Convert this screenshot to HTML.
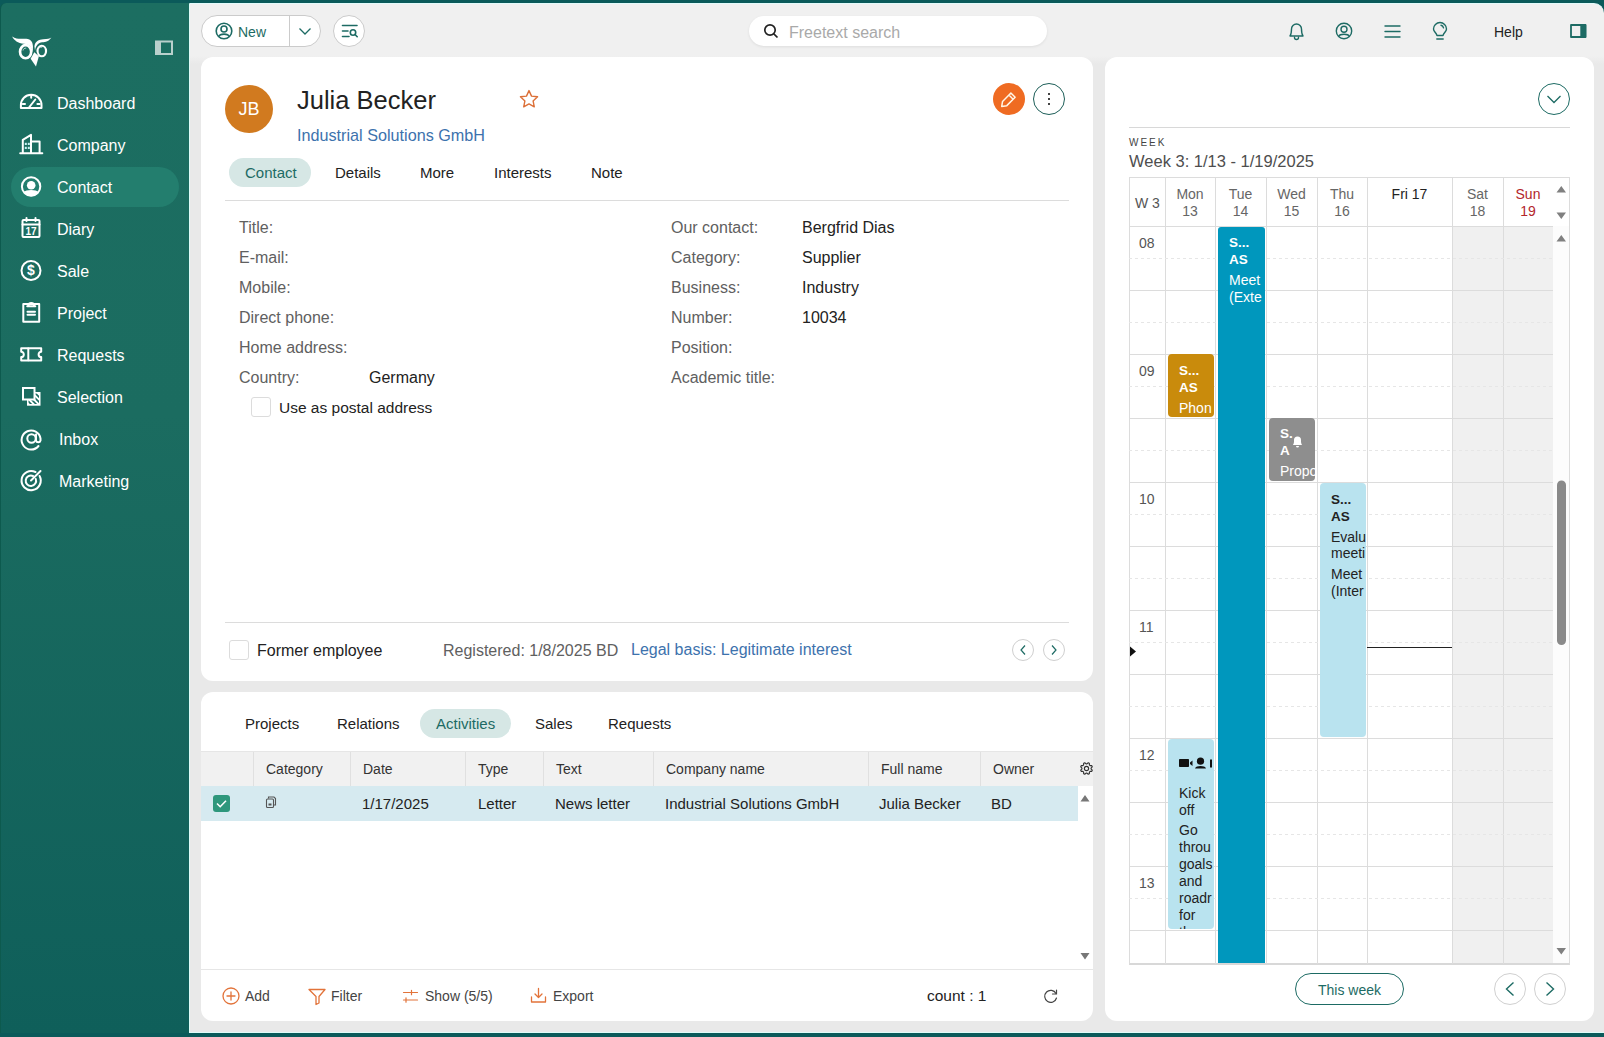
<!DOCTYPE html>
<html><head><meta charset="utf-8">
<style>
*{box-sizing:border-box;margin:0;padding:0}
html,body{width:1604px;height:1037px;overflow:hidden}
body{background:#0b5a5a;font-family:"Liberation Sans",sans-serif;position:relative;color:#222}
.a{position:absolute}
.t{position:absolute;white-space:nowrap;line-height:20px;height:20px}
#side{left:0;top:3px;width:189px;height:1030px;background:linear-gradient(180deg,#1c6e61 0%,#1b6c60 40%,#0f5f5a 100%);border-top-left-radius:6px;border-left:1px solid #0d5a4e}
#main{left:189px;top:3px;width:1415px;height:1030px;background:linear-gradient(180deg,#f0f0f0 0px,#f0f0f0 52px,#e9e9e9 60px,#e9e9e9 100%);border-left:1px solid #dffcf8;border-top:1px solid #e3fbfb;border-bottom:1px solid #dffcf8;border-top-right-radius:10px}
.card{position:absolute;background:#fff;border-radius:12px}
.nav{position:absolute;left:0;width:189px;height:20px;color:#fff;font-size:16px}
.nav span{position:absolute;left:57px;top:0;line-height:20px}
.nav svg{position:absolute;left:19px;top:-2px}
.ico{position:absolute}
.lbl{font-size:16px;color:#606060}
.val{font-size:16px;color:#222}
.th{font-size:14px;color:#333}
.td{font-size:15px;color:#222}
.ft{font-size:14px;color:#444}
.ev{overflow:hidden;font-size:14px}
.ev b,.ev i{position:absolute;left:11px;font-style:normal;white-space:nowrap;line-height:16px}
.ev b{font-weight:bold;font-size:13.5px}
</style></head>
<body>
<div id="side" class="a">
</div>
<!-- logo -->
<svg class="a" style="left:12px;top:36px" width="40" height="31" viewBox="140 220 820 640">
<path fill="#fff" d="M140,230 C250,300 330,275 430,275 C530,280 570,350 570,440 L565,560 C545,450 500,385 380,378 C260,370 180,310 140,230 Z"/>
<path fill="#fff" d="M950,250 C900,330 830,345 760,350 C680,360 625,420 612,520 L600,430 C615,330 690,292 780,287 C870,282 920,275 950,250 Z"/>
<ellipse cx="418" cy="545" rx="115" ry="135" fill="none" stroke="#fff" stroke-width="55"/>
<ellipse cx="752" cy="530" rx="88" ry="108" fill="none" stroke="#fff" stroke-width="45"/>
<path fill="none" stroke="#fff" stroke-width="14" d="M365,520 C370,480 400,470 430,470 M690,480 C700,455 730,445 760,455"/>
<path fill="#fff" d="M522,690 L598,558 L692,640 L632,852 Z"/>
<path fill="none" stroke="#1b6b60" stroke-width="12" d="M598,520 L660,580"/>
</svg>
<!-- collapse icon -->
<svg class="a" style="left:155px;top:40px" width="19" height="16" viewBox="0 0 19 16">
<rect x="1" y="1.5" width="16" height="12.5" fill="none" stroke="#b9d0cc" stroke-width="2"/>
<rect x="1" y="1.5" width="5" height="12.5" fill="#b9d0cc"/>
</svg>
<!-- active pill -->
<div class="a" style="left:11px;top:167px;width:168px;height:40px;border-radius:20px;background:#237e6e"></div>
<div class="nav" style="top:94px"><span>Dashboard</span></div>
<div class="nav" style="top:136px"><span>Company</span></div>
<div class="nav" style="top:178px"><span>Contact</span></div>
<div class="nav" style="top:220px"><span>Diary</span></div>
<div class="nav" style="top:262px"><span>Sale</span></div>
<div class="nav" style="top:304px"><span>Project</span></div>
<div class="nav" style="top:346px"><span>Requests</span></div>
<div class="nav" style="top:388px"><span>Selection</span></div>
<div class="nav" style="top:430px"><span style="left:59px">Inbox</span></div>
<div class="nav" style="top:472px"><span style="left:59px">Marketing</span></div>
<svg class="a" style="left:0;top:0" width="189" height="520" viewBox="0 0 189 520" fill="none" stroke="#fff" stroke-width="2" stroke-linecap="round" stroke-linejoin="round">
<!-- dashboard gauge -->
<path d="M20.9,108 L20.9,105 A10.3,10.3 0 0 1 41.5,105 L41.5,108 Z"/>
<path d="M22.8,104 L25,104 M37.4,104 L39.6,104 M31.2,95.8 L31.2,97.8 M29,107.5 L35.3,99.5"/>
<!-- company -->
<path d="M20.2,153.2 L42.3,153.2 M22.8,153 L22.8,139.8 L31,134.8 L31,153 M31,141.6 L39.6,141.6 L39.6,153"/>
<rect x="24.8" y="142.8" width="2" height="2.2" fill="#c8f4f4" stroke="none"/><rect x="27.8" y="142.8" width="2" height="2.2" fill="#c8f4f4" stroke="none"/>
<rect x="24.8" y="146.8" width="2" height="2.2" fill="#c8f4f4" stroke="none"/><rect x="27.8" y="146.8" width="2" height="2.2" fill="#c8f4f4" stroke="none"/>
<!-- contact -->
<circle cx="31.1" cy="186.5" r="9.2"/>
<circle cx="31.2" cy="185.3" r="4.3" fill="#fff" stroke="none"/>
<path d="M23.8,192.5 C25.5,189.3 36.7,189.3 38.4,192.5 A9,9 0 0 1 23.8,192.5 Z" fill="#fff" stroke="none"/>
<!-- diary -->
<rect x="22.5" y="220" width="17" height="17" rx="1"/>
<path d="M22.5,224.5 L39.5,224.5 M26.5,218 L26.5,221 M35.5,218 L35.5,221"/>
<!-- sale -->
<circle cx="31" cy="270.5" r="9.5"/>
<!-- project -->
<path d="M23.3,304 L23.3,321.8 L39.2,321.8 L39.2,304 Z"/>
<path d="M27.2,306.2 L35.3,306.2 M28.3,305.5 A3,3 0 0 1 34.2,305.5"/>
<path d="M27.5,311.8 L35,311.8 M27.5,314.8 L35,314.8"/>
<!-- requests -->
<path d="M21.2,348.3 L41.2,348.3 L41.2,351.8 A2.6,2.6 0 0 0 41.2,357 L41.2,360.5 L21.2,360.5 L21.2,357 A2.6,2.6 0 0 0 21.2,351.8 Z"/>
<path d="M28.3,348.5 L28.3,360.3"/>
<!-- selection -->
<clipPath id="selclip"><rect x="28.5" y="393.5" width="10.5" height="10.5"/></clipPath>
<rect x="27" y="392" width="13.5" height="13.7" fill="#fff" stroke="none"/>
<path clip-path="url(#selclip)" d="M34.5,392.5 L41,399 M34,397 L42,405 M31,399 L38,406 M26,399 L33,406" stroke="#1b6b60" stroke-width="1.6" stroke-linecap="butt"/>
<rect x="23" y="388" width="11.5" height="11.5" fill="#1b6b60" stroke-linecap="butt" stroke-linejoin="miter"/>
<!-- inbox -->
<path d="M38.5,446 A9.5,9.5 0 1 1 40.5,438.5 L40.5,440.5 A2.3,2.3 0 0 1 36,440.5 L36,434.5"/>
<circle cx="31.5" cy="438.5" r="4.2"/>
<!-- marketing -->
<path d="M39.6,476 A9.6,9.6 0 1 1 35.5,472"/>
<path d="M35.8,479 A5.2,5.2 0 1 1 33,476"/>
<path d="M31,480.5 L40.5,471"/>
</svg>
<div class="a" style="left:0;top:0;width:189px;height:20px"></div>
<svg class="a" style="left:0;top:0" width="189" height="300" viewBox="0 0 189 300">
<text x="31" y="235" fill="#fff" font-size="10" font-weight="bold" text-anchor="middle" font-family="Liberation Sans">17</text>
<text x="31" y="275" fill="#fff" font-size="14" font-weight="bold" text-anchor="middle" font-family="Liberation Sans">$</text>
</svg>

<div id="main" class="a"></div>

<!-- TOPBAR -->
<div class="a" style="left:201px;top:15px;width:120px;height:32px;border:1px solid #cbcbcb;border-radius:16px;background:#fff"></div>
<div class="a" style="left:289px;top:15px;width:1px;height:32px;background:#cbcbcb"></div>
<svg class="a" style="left:214px;top:21px" width="20" height="20" viewBox="0 0 20 20" fill="none" stroke="#1d6b64" stroke-width="1.6">
<circle cx="10" cy="10" r="7.8"/><circle cx="10" cy="8" r="3"/><path d="M4.8,15.6 C6,12.3 14,12.3 15.2,15.6"/>
</svg>
<div class="t" style="left:238px;top:22px;font-size:14px;color:#1d6b64">New</div>
<svg class="a" style="left:298px;top:26px" width="14" height="10" viewBox="0 0 14 10" fill="none" stroke="#1d6b64" stroke-width="1.3"><path d="M1.5,2.5 L7,8 L12.5,2.5"/></svg>
<div class="a" style="left:333px;top:15px;width:32px;height:32px;border:1px solid #cbcbcb;border-radius:50%;background:#fff"></div>
<svg class="a" style="left:341px;top:23px" width="18" height="16" viewBox="0 0 18 16" fill="none" stroke="#1d6b64" stroke-width="1.6" stroke-linecap="round">
<path d="M1.5,2.5 L16,2.5 M1.5,8 L7,8 M1.5,13.5 L8,13.5"/><circle cx="12" cy="9.5" r="2.7"/><path d="M14,11.5 L16.2,13.7"/>
</svg>
<div class="a" style="left:749px;top:16px;width:298px;height:30px;border-radius:15px;background:#fff;box-shadow:0 1px 3px rgba(0,0,0,.08)"></div>
<svg class="a" style="left:763px;top:23px" width="16" height="16" viewBox="0 0 16 16" fill="none" stroke="#222" stroke-width="1.7"><circle cx="7" cy="7" r="5.2"/><path d="M10.8,10.8 L14.5,14.5"/></svg>
<div class="t" style="left:789px;top:23px;font-size:16px;color:#a9a9a9">Freetext search</div>
<svg class="a" style="left:1280px;top:18px" width="320" height="26" viewBox="1280 18 320 26" fill="none" stroke="#1d6b64" stroke-width="1.4" stroke-linecap="round" stroke-linejoin="round">
<path d="M1290,36 L1303,36 C1301.5,34 1301.5,32 1301.5,29 A5,5 0 0 0 1291.5,29 C1291.5,32 1291.5,34 1290,36 Z M1294.5,37.5 A2,2 0 0 0 1298.5,37.5"/>
<circle cx="1344" cy="31" r="7.7"/><circle cx="1344" cy="29.2" r="3"/><path d="M1338.8,36.3 C1340,33.6 1348,33.6 1349.2,36.3"/>
<path d="M1385,26 L1400,26 M1385,31.5 L1400,31.5 M1385,37 L1400,37"/>
<path d="M1437,35.5 C1436,32.5 1433.5,31.5 1433.5,29 A6.5,6.5 0 0 1 1446.5,29 C1446.5,31.5 1444,32.5 1443,35.5 Z M1436.8,39 L1443.2,39 M1441,25.2 A3.5,3.5 0 0 1 1443.5,27.8"/>
<rect x="1571" y="25" width="14.5" height="12" stroke-width="1.8"/><rect x="1581" y="25" width="4.5" height="12" fill="#1d6b64"/>
</svg>
<div class="t" style="left:1494px;top:22px;font-size:14px;color:#222">Help</div>

<!-- cards -->
<div class="card" style="left:201px;top:57px;width:892px;height:624px"></div>
<div class="card" style="left:201px;top:692px;width:892px;height:329px"></div>
<div class="card" style="left:1105px;top:57px;width:489px;height:964px"></div>
<!-- CALENDAR CARD -->
<div class="a" style="left:1538px;top:83px;width:32px;height:32px;border-radius:50%;border:1.3px solid #1d6b64"></div>
<svg class="a" style="left:1546px;top:93px" width="16" height="12" viewBox="0 0 16 12" fill="none" stroke="#1d6b64" stroke-width="1.3"><path d="M1.5,3 L8,9.5 L14.5,3"/></svg>
<div class="a" style="left:1129px;top:127px;width:441px;height:1px;background:#d8d8d8"></div>
<div class="t" style="left:1129px;top:133px;font-size:10px;letter-spacing:2px;color:#444">WEEK</div>
<div class="t" style="left:1129px;top:151px;font-size:16.5px;color:#4e4e4e">Week 3: 1/13 - 1/19/2025</div>
<div class="a" style="left:1452px;top:226px;width:101px;height:738px;background:#f0f0f0"></div>
<div class="a" style="left:1553px;top:226px;width:16px;height:738px;background:#fcfcfc"></div>
<div class="a" style="left:1129px;top:177px;width:441px;height:788px;border:1px solid #dcdcdc;border-bottom:2px solid #d8d8d8"></div>
<div class="a" style="left:1129px;top:226px;width:424px;height:1px;background:#dcdcdc"></div>
<div class="a" style="left:1165px;top:177px;width:1px;height:787px;background:#dcdcdc"></div>
<div class="a" style="left:1215px;top:177px;width:1px;height:787px;background:#dcdcdc"></div>
<div class="a" style="left:1266px;top:177px;width:1px;height:787px;background:#dcdcdc"></div>
<div class="a" style="left:1317px;top:177px;width:1px;height:787px;background:#dcdcdc"></div>
<div class="a" style="left:1367px;top:177px;width:1px;height:787px;background:#dcdcdc"></div>
<div class="a" style="left:1452px;top:177px;width:1px;height:787px;background:#dcdcdc"></div>
<div class="a" style="left:1503px;top:177px;width:1px;height:787px;background:#dcdcdc"></div>
<div class="a" style="left:1129px;top:290px;width:424px;height:1px;background:#dcdcdc"></div>
<div class="a" style="left:1129px;top:354px;width:424px;height:1px;background:#dcdcdc"></div>
<div class="a" style="left:1129px;top:418px;width:424px;height:1px;background:#dcdcdc"></div>
<div class="a" style="left:1129px;top:482px;width:424px;height:1px;background:#dcdcdc"></div>
<div class="a" style="left:1129px;top:546px;width:424px;height:1px;background:#dcdcdc"></div>
<div class="a" style="left:1129px;top:610px;width:424px;height:1px;background:#dcdcdc"></div>
<div class="a" style="left:1129px;top:674px;width:424px;height:1px;background:#dcdcdc"></div>
<div class="a" style="left:1129px;top:738px;width:424px;height:1px;background:#dcdcdc"></div>
<div class="a" style="left:1129px;top:802px;width:424px;height:1px;background:#dcdcdc"></div>
<div class="a" style="left:1129px;top:866px;width:424px;height:1px;background:#dcdcdc"></div>
<div class="a" style="left:1129px;top:930px;width:424px;height:1px;background:#dcdcdc"></div>
<svg class="a" style="left:0;top:0" width="1604" height="1037" viewBox="0 0 1604 1037" stroke="#e6e6e6" stroke-width="1" stroke-dasharray="3,3"><line x1="1129" y1="258.5" x2="1553" y2="258.5"/><line x1="1129" y1="322.5" x2="1553" y2="322.5"/><line x1="1129" y1="386.5" x2="1553" y2="386.5"/><line x1="1129" y1="450.5" x2="1553" y2="450.5"/><line x1="1129" y1="514.5" x2="1553" y2="514.5"/><line x1="1129" y1="578.5" x2="1553" y2="578.5"/><line x1="1129" y1="642.5" x2="1553" y2="642.5"/><line x1="1129" y1="706.5" x2="1553" y2="706.5"/><line x1="1129" y1="770.5" x2="1553" y2="770.5"/><line x1="1129" y1="834.5" x2="1553" y2="834.5"/><line x1="1129" y1="898.5" x2="1553" y2="898.5"/></svg>
<div class="t" style="left:1139px;top:233px;font-size:14px;color:#555">08</div>
<div class="t" style="left:1139px;top:361px;font-size:14px;color:#555">09</div>
<div class="t" style="left:1139px;top:489px;font-size:14px;color:#555">10</div>
<div class="t" style="left:1139px;top:617px;font-size:14px;color:#555">11</div>
<div class="t" style="left:1139px;top:745px;font-size:14px;color:#555">12</div>
<div class="t" style="left:1139px;top:873px;font-size:14px;color:#555">13</div>
<div class="t" style="left:1135px;top:193px;font-size:14px;color:#555">W 3</div>
<div class="t" style="left:1165px;top:184px;width:50px;text-align:center;font-size:14px;color:#666">Mon</div><div class="t" style="left:1165px;top:201px;width:50px;text-align:center;font-size:14px;color:#666">13</div>
<div class="t" style="left:1215px;top:184px;width:51px;text-align:center;font-size:14px;color:#666">Tue</div><div class="t" style="left:1215px;top:201px;width:51px;text-align:center;font-size:14px;color:#666">14</div>
<div class="t" style="left:1266px;top:184px;width:51px;text-align:center;font-size:14px;color:#666">Wed</div><div class="t" style="left:1266px;top:201px;width:51px;text-align:center;font-size:14px;color:#666">15</div>
<div class="t" style="left:1317px;top:184px;width:50px;text-align:center;font-size:14px;color:#666">Thu</div><div class="t" style="left:1317px;top:201px;width:50px;text-align:center;font-size:14px;color:#666">16</div>
<div class="t" style="left:1367px;top:184px;width:85px;text-align:center;font-size:14px;color:#222">Fri 17</div>
<div class="t" style="left:1452px;top:184px;width:51px;text-align:center;font-size:14px;color:#666">Sat</div><div class="t" style="left:1452px;top:201px;width:51px;text-align:center;font-size:14px;color:#666">18</div>
<div class="t" style="left:1503px;top:184px;width:50px;text-align:center;font-size:14px;color:#b3262b">Sun</div><div class="t" style="left:1503px;top:201px;width:50px;text-align:center;font-size:14px;color:#b3262b">19</div>
<svg class="a" style="left:1553px;top:180px" width="17" height="785" viewBox="1553 180 17 785" fill="#808080"><path d="M1556.5,192.5 L1561.3,186 L1566,192.5 Z M1556.5,212.5 L1566,212.5 L1561.3,219 Z M1556.5,241.5 L1561.3,235 L1566,241.5 Z M1556.5,948 L1566,948 L1561.3,954.5 Z"/><rect x="1557" y="480.5" width="9" height="164.5" rx="4.5" fill="#8a8a8a"/></svg>
<div class="a" style="left:1367px;top:647px;width:85px;height:1.3px;background:#222"></div>
<svg class="a" style="left:1129px;top:645px" width="9" height="13" viewBox="0 0 9 13"><path d="M1,1.5 L7,6.5 L1,11.5 Z" fill="#111"/></svg>
<div class="a ev" style="left:1218px;top:227px;width:47px;height:736px;background:#0097bd;border-radius:3px 3px 0 0;color:#fff"><b style="top:8px">S...</b><b style="top:25px">AS</b><i style="top:45px">Meet</i><i style="top:62px">(Exte</i></div>
<div class="a ev" style="left:1168px;top:354px;width:46px;height:63px;background:#c98b0c;border-radius:4px;color:#fff"><b style="top:9px">S...</b><b style="top:26px">AS</b><i style="top:46px">Phon</i></div>
<div class="a ev" style="left:1269px;top:418px;width:46px;height:63px;background:#8e8e8e;border-radius:4px;color:#fff"><b style="top:8px">S.</b><b style="top:25px">A</b><i style="top:45px">Propo</i><svg style="position:absolute;left:23px;top:17px" width="11" height="13" viewBox="0 0 11 13"><path d="M1,10 L10,10 C9,8.5 9,7 9,5 A3.5,3.5 0 0 0 2,5 C2,7 2,8.5 1,10 Z M4,11 A1.5,1.5 0 0 0 7,11 Z" fill="#fff"/></svg></div>
<div class="a ev" style="left:1320px;top:483px;width:46px;height:254px;background:#b9e3ef;border-radius:4px;color:#222"><b style="top:9px">S...</b><b style="top:26px">AS</b><i style="top:46px">Evalu</i><i style="top:62px">meeti</i><i style="top:83px">Meet</i><i style="top:100px">(Inter</i></div>
<div class="a ev" style="left:1168px;top:739px;width:46px;height:190px;background:#b9e3ef;border-radius:4px;color:#222"><svg style="position:absolute;left:11px;top:18px" width="40" height="12" viewBox="0 0 40 12" fill="#111"><rect x="0" y="2" width="10" height="8" rx="0.8"/><path d="M11,5.5 L13.5,3.5 L13.5,9 L11,7 Z"/><circle cx="21.5" cy="4.2" r="3.6"/><path d="M16,11.5 C17,8.3 26,8.3 27,11.5 Z"/><rect x="31" y="2.5" width="2" height="8"/></svg><i style="top:46px">Kick</i><i style="top:63px">off</i><i style="top:83px">Go</i><i style="top:100px">throu</i><i style="top:117px">goals</i><i style="top:134px">and</i><i style="top:151px">roadr</i><i style="top:168px">for</i><i style="top:185px">the</i></div>
<div class="a" style="left:1295px;top:973px;width:109px;height:32px;border-radius:16px;border:1.3px solid #1d6b64"></div>
<div class="t" style="left:1295px;top:980px;width:109px;text-align:center;font-size:14px;color:#1d6b64">This week</div>
<div class="a" style="left:1494px;top:973px;width:32px;height:32px;border-radius:50%;border:1px solid #d0d0d0"></div>
<div class="a" style="left:1534px;top:973px;width:32px;height:32px;border-radius:50%;border:1px solid #d0d0d0"></div>
<svg class="a" style="left:1494px;top:973px" width="72" height="32" viewBox="0 0 72 32" fill="none" stroke="#1d6b64" stroke-width="1.4"><path d="M19.5,9.5 L12.5,16 L19.5,22.5 M52.5,9.5 L59.5,16 L52.5,22.5"/></svg>
<!-- ACTIVITIES CARD -->
<div class="a" style="left:420px;top:709px;width:91px;height:29px;border-radius:15px;background:#d6e7e5"></div>
<div class="t" style="left:245px;top:714px;font-size:15px;color:#222">Projects</div>
<div class="t" style="left:337px;top:714px;font-size:15px;color:#222">Relations</div>
<div class="t" style="left:436px;top:714px;font-size:15px;color:#1d6b64">Activities</div>
<div class="t" style="left:535px;top:714px;font-size:15px;color:#222">Sales</div>
<div class="t" style="left:608px;top:714px;font-size:15px;color:#222">Requests</div>
<div class="a" style="left:201px;top:751px;width:892px;height:35px;background:#f1f1f1;border-top:1px solid #e6e6e6"></div>
<div class="a" style="left:253px;top:752px;width:1px;height:34px;background:#e0e0e0"></div>
<div class="a" style="left:350px;top:752px;width:1px;height:34px;background:#e0e0e0"></div>
<div class="a" style="left:465px;top:752px;width:1px;height:34px;background:#e0e0e0"></div>
<div class="a" style="left:543px;top:752px;width:1px;height:34px;background:#e0e0e0"></div>
<div class="a" style="left:653px;top:752px;width:1px;height:34px;background:#e0e0e0"></div>
<div class="a" style="left:868px;top:752px;width:1px;height:34px;background:#e0e0e0"></div>
<div class="a" style="left:980px;top:752px;width:1px;height:34px;background:#e0e0e0"></div>
<div class="t th" style="left:266px;top:759px">Category</div>
<div class="t th" style="left:363px;top:759px">Date</div>
<div class="t th" style="left:478px;top:759px">Type</div>
<div class="t th" style="left:556px;top:759px">Text</div>
<div class="t th" style="left:666px;top:759px">Company name</div>
<div class="t th" style="left:881px;top:759px">Full name</div>
<div class="t th" style="left:993px;top:759px">Owner</div>
<svg class="a" style="left:1079.5px;top:761.5px" width="13" height="13" viewBox="0 0 13 13" fill="none" stroke="#333" stroke-width="1.15" stroke-linejoin="round"><path d="M11.08,6.95 L12.24,8.24 L11.79,9.33 L10.06,9.42 L9.42,10.06 L9.33,11.79 L8.24,12.24 L6.95,11.08 L6.05,11.08 L4.76,12.24 L3.67,11.79 L3.58,10.06 L2.94,9.42 L1.21,9.33 L0.76,8.24 L1.92,6.95 L1.92,6.05 L0.76,4.76 L1.21,3.67 L2.94,3.58 L3.58,2.94 L3.67,1.21 L4.76,0.76 L6.05,1.92 L6.95,1.92 L8.24,0.76 L9.33,1.21 L9.42,2.94 L10.06,3.58 L11.79,3.67 L12.24,4.76 L11.08,6.05 Z"/><circle cx="6.5" cy="6.5" r="2.1"/></svg>
<div class="a" style="left:201px;top:786px;width:877px;height:35px;background:#d6eaf0"></div>
<div class="a" style="left:213px;top:795px;width:17px;height:17px;border-radius:3px;background:#2e977c"></div>
<svg class="a" style="left:213px;top:795px" width="17" height="17" viewBox="0 0 17 17" fill="none" stroke="#fff" stroke-width="1.6"><path d="M4,8.5 L7.2,11.7 L13,5.8"/></svg>
<svg class="a" style="left:265px;top:796px" width="12" height="13" viewBox="0 0 12 13" fill="none" stroke="#555" stroke-width="1.1">
<path d="M3.5,2.5 L3.5,1 L9,1 L10.5,2.5 L10.5,9 L9,9"/><rect x="1.5" y="3" width="7" height="8.5" rx="1"/><rect x="3.5" y="7.5" width="3" height="2" fill="#555" stroke="none"/></svg>
<div class="t td" style="left:362px;top:794px">1/17/2025</div>
<div class="t td" style="left:478px;top:794px">Letter</div>
<div class="t td" style="left:555px;top:794px">News letter</div>
<div class="t td" style="left:665px;top:794px">Industrial Solutions GmbH</div>
<div class="t td" style="left:879px;top:794px">Julia Becker</div>
<div class="t td" style="left:991px;top:794px">BD</div>
<svg class="a" style="left:1079px;top:791px" width="12" height="172" viewBox="0 0 12 172" fill="#777"><path d="M1.5,10.5 L6,4 L10.5,10.5 Z M1.5,162 L10.5,162 L6,168.5 Z"/></svg>
<div class="a" style="left:201px;top:969px;width:892px;height:1px;background:#e6e6e6"></div>
<svg class="a" style="left:220px;top:985px" width="400" height="22" viewBox="220 985 400 22" fill="none" stroke="#e2733a" stroke-width="1.3" stroke-linecap="round" stroke-linejoin="round">
<circle cx="231" cy="996" r="8"/><path d="M231,992 L231,1000 M227,996 L235,996"/>
<path d="M309,989.5 L325,989.5 L319,996.5 L319,1003 L316,1004.5 L316,996.5 Z"/>
<path d="M403.5,992.5 L417.5,992.5 M403.5,1000 L417.5,1000 M411.5,990.3 L411.5,994.7 M406,997.8 L406,1002.2" stroke-width="1.2"/>
<path d="M531.5,997 L531.5,1002 L545.5,1002 L545.5,997 M538.5,988.5 L538.5,997.5 M535,994 L538.5,997.5 L542,994"/>
</svg>
<div class="t ft" style="left:245px;top:986px">Add</div>
<div class="t ft" style="left:331px;top:986px">Filter</div>
<div class="t ft" style="left:425px;top:986px">Show (5/5)</div>
<div class="t ft" style="left:553px;top:986px">Export</div>
<div class="t ft" style="left:927px;top:986px;color:#222;font-size:15.5px">count : 1</div>
<svg class="a" style="left:1042px;top:987px" width="18" height="18" viewBox="0 0 18 18" fill="none" stroke="#444" stroke-width="1.2" stroke-linecap="round"><path d="M14,6.5 A6,6 0 1 0 14.5,11"/><path d="M14.5,3 L14.5,7 L10.5,7"/></svg>

<!-- CONTACT CARD -->
<div class="a" style="left:225px;top:85px;width:48px;height:48px;border-radius:50%;background:#d17a1f"></div>
<div class="t" style="left:225px;top:99px;width:48px;text-align:center;font-size:18px;color:#fff">JB</div>
<div class="t" style="left:297px;top:85px;height:30px;line-height:30px;font-size:25.5px;color:#222">Julia Becker</div>
<svg class="a" style="left:0;top:0" width="600" height="130" viewBox="0 0 600 130" fill="none" stroke="#dc7038" stroke-width="1.4" stroke-linejoin="round"><path d="M529.00,90.60 L531.53,96.12 L537.56,96.82 L533.09,100.93 L534.29,106.88 L529.00,103.90 L523.71,106.88 L524.91,100.93 L520.44,96.82 L526.47,96.12 Z"/></svg>
<div class="t" style="left:297px;top:125px;font-size:16.2px;color:#3d72ad">Industrial Solutions GmbH</div>
<div class="a" style="left:993px;top:83px;width:32px;height:32px;border-radius:50%;background:#ef6b22"></div>
<svg class="a" style="left:993px;top:83px" width="32" height="32" viewBox="0 0 32 32" fill="none" stroke="#fff6e6" stroke-width="1.5" stroke-linejoin="round"><path d="M8.70,23.50 L9.55,18.41 L17.89,10.07 L22.13,14.31 L13.79,22.65 Z M15.91,12.04 L20.16,16.29"/></svg>
<div class="a" style="left:1033px;top:83px;width:32px;height:32px;border-radius:50%;border:1.3px solid #1d5e58"></div>
<div class="a" style="left:1048px;top:93px;width:2px;height:2px;background:#444"></div>
<div class="a" style="left:1048px;top:98px;width:2px;height:2px;background:#444"></div>
<div class="a" style="left:1048px;top:103px;width:2px;height:2px;background:#444"></div>
<!-- tabs -->
<div class="a" style="left:229px;top:158px;width:82px;height:29px;border-radius:15px;background:#d6e7e5"></div>
<div class="t" style="left:245px;top:163px;font-size:15px;color:#1d6b64">Contact</div>
<div class="t" style="left:335px;top:163px;font-size:15px;color:#222">Details</div>
<div class="t" style="left:420px;top:163px;font-size:15px;color:#222">More</div>
<div class="t" style="left:494px;top:163px;font-size:15px;color:#222">Interests</div>
<div class="t" style="left:591px;top:163px;font-size:15px;color:#222">Note</div>
<div class="a" style="left:225px;top:200px;width:844px;height:1px;background:#dcdcdc"></div>
<!-- fields -->
<div class="t lbl" style="left:239px;top:218px">Title:</div>
<div class="t lbl" style="left:239px;top:248px">E-mail:</div>
<div class="t lbl" style="left:239px;top:278px">Mobile:</div>
<div class="t lbl" style="left:239px;top:308px">Direct phone:</div>
<div class="t lbl" style="left:239px;top:338px">Home address:</div>
<div class="t lbl" style="left:239px;top:368px">Country:</div>
<div class="t val" style="left:369px;top:368px">Germany</div>
<div class="a" style="left:251px;top:397px;width:20px;height:20px;border:1px solid #dcdcdc;border-radius:3px"></div>
<div class="t val" style="left:279px;top:398px;font-size:15.5px">Use as postal address</div>
<div class="t lbl" style="left:671px;top:218px">Our contact:</div>
<div class="t lbl" style="left:671px;top:248px">Category:</div>
<div class="t lbl" style="left:671px;top:278px">Business:</div>
<div class="t lbl" style="left:671px;top:308px">Number:</div>
<div class="t lbl" style="left:671px;top:338px">Position:</div>
<div class="t lbl" style="left:671px;top:368px">Academic title:</div>
<div class="t val" style="left:802px;top:218px">Bergfrid Dias</div>
<div class="t val" style="left:802px;top:248px">Supplier</div>
<div class="t val" style="left:802px;top:278px">Industry</div>
<div class="t val" style="left:802px;top:308px">10034</div>
<div class="a" style="left:225px;top:622px;width:844px;height:1px;background:#dcdcdc"></div>
<div class="a" style="left:229px;top:640px;width:20px;height:20px;border:1px solid #dcdcdc;border-radius:3px"></div>
<div class="t val" style="left:257px;top:641px">Former employee</div>
<div class="t lbl" style="left:443px;top:641px">Registered: 1/8/2025 BD</div>
<div class="t" style="left:631px;top:640px;font-size:16px;color:#3d72ad">Legal basis: Legitimate interest</div>
<div class="a" style="left:1012px;top:639px;width:22px;height:22px;border-radius:50%;border:1px solid #cfcfcf"></div>
<div class="a" style="left:1043px;top:639px;width:22px;height:22px;border-radius:50%;border:1px solid #cfcfcf"></div>
<svg class="a" style="left:1012px;top:639px" width="54" height="22" viewBox="0 0 54 22" fill="none" stroke="#1d6b64" stroke-width="1.2"><path d="M13,6.5 L9,11 L13,15.5 M40,6.5 L44,11 L40,15.5"/></svg>


</body></html>
